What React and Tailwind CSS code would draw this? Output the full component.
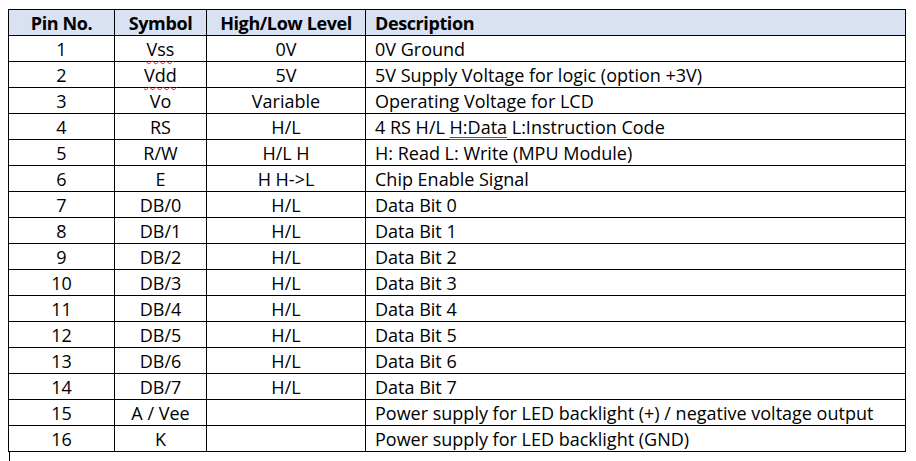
import React from 'react';

const rows = [
  ['1', 'Vss', '0V', '0V Ground', 'spell'],
  ['2', 'Vdd', '5V', '5V Supply Voltage for logic (option +3V)', 'spell'],
  ['3', 'Vo', 'Variable', 'Operating Voltage for LCD'],
  ['4', 'RS', 'H/L', 'grammar'],
  ['5', 'R/W', 'H/L H', 'H: Read L: Write (MPU Module)'],
  ['6', 'E', 'H H->L', 'Chip Enable Signal'],
  ['7', 'DB/0', 'H/L', 'Data Bit 0'],
  ['8', 'DB/1', 'H/L', 'Data Bit 1'],
  ['9', 'DB/2', 'H/L', 'Data Bit 2'],
  ['10', 'DB/3', 'H/L', 'Data Bit 3'],
  ['11', 'DB/4', 'H/L', 'Data Bit 4'],
  ['12', 'DB/5', 'H/L', 'Data Bit 5'],
  ['13', 'DB/6', 'H/L', 'Data Bit 6'],
  ['14', 'DB/7', 'H/L', 'Data Bit 7'],
  ['15', 'A / Vee', '', 'Power supply for LED backlight (+) / negative voltage output'],
  ['16', 'K', '', 'Power supply for LED backlight (GND)'],
];

function Description({ text }) {
  if (text === 'grammar') {
    return (
      <>
        4 RS H/L{' '}
        <span className="underline decoration-double decoration-[#2f55d4] underline-offset-[3px]">H:Data</span>{' '}
        L:Instruction Code
      </>
    );
  }
  return text;
}

export default function App() {
  return (
    <div className="h-[461px] w-[916px] bg-white pl-2 pt-[9px] text-black" style={{ fontFamily: '"Open Sans", Lato, sans-serif' }}>
      <table className="w-[898px] table-fixed border-collapse text-[18px]">
        <colgroup>
          <col className="w-[106px]" />
          <col className="w-[92px]" />
          <col className="w-[159px]" />
          <col />
        </colgroup>
        <thead>
          <tr className="h-[26px] bg-[#d9e2f3] font-bold tracking-[-0.4px]">
            <th className="border border-black p-0 text-center leading-none">Pin No.</th>
            <th className="border border-black p-0 text-center leading-none">Symbol</th>
            <th className="border border-black p-0 text-center leading-none">High/Low Level</th>
            <th className="border border-black p-0 pl-[9px] text-left leading-none">Description</th>
          </tr>
        </thead>
        <tbody>
          {rows.map(([pin, symbol, level, desc, mark]) => (
            <tr key={pin} className="h-[26px]">
              <td className="border border-black p-0 text-center leading-none">{pin}</td>
              <td className="border border-black p-0 text-center leading-none">
                {mark === 'spell' ? (
                  <span className="underline decoration-wavy decoration-[#e02020] decoration-1 underline-offset-[4px]">{symbol}</span>
                ) : (
                  symbol
                )}
              </td>
              <td className="border border-black p-0 text-center leading-none">{level}</td>
              <td className="border border-black p-0 pl-[9px] leading-none">
                <Description text={desc} />
              </td>
            </tr>
          ))}
        </tbody>
      </table>
      <div className="ml-px h-3 w-px bg-black" />
    </div>
  );
}
